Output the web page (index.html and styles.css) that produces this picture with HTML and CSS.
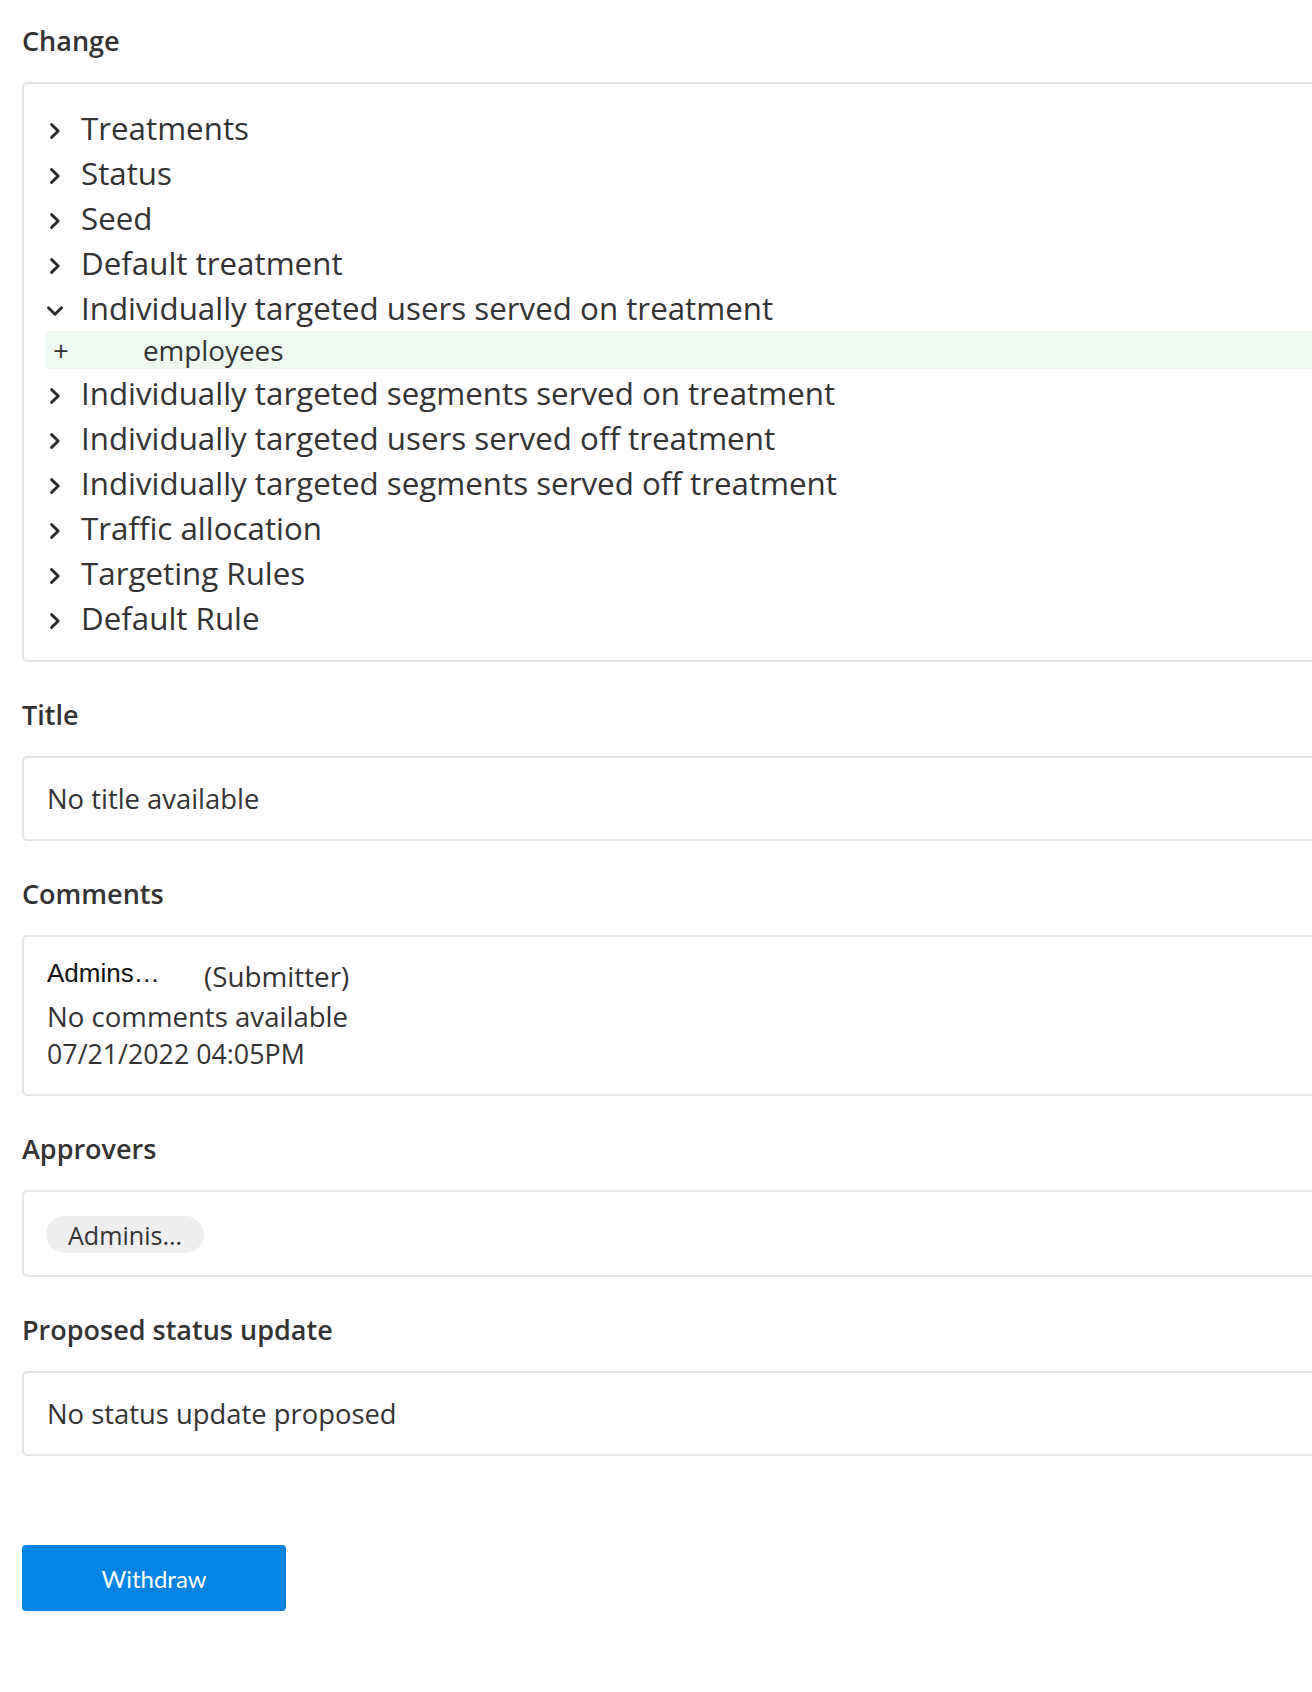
FILE: index.html
```html
<!DOCTYPE html>
<html lang="en">
<head>
<meta charset="utf-8">
<title>Change request</title>
<link rel="stylesheet" href="styles.css">
</head>
<body>
<div class="page">
  <section class="field">
    <h3 class="field-label">Change</h3>
    <div class="field-box tree">
      <div class="tree-item"><svg class="chev" viewBox="0 0 18 18"><path d="M5.6 2.6 L12.2 9 L5.6 15.4"/></svg><span>Treatments</span></div>
      <div class="tree-item"><svg class="chev" viewBox="0 0 18 18"><path d="M5.6 2.6 L12.2 9 L5.6 15.4"/></svg><span>Status</span></div>
      <div class="tree-item"><svg class="chev" viewBox="0 0 18 18"><path d="M5.6 2.6 L12.2 9 L5.6 15.4"/></svg><span>Seed</span></div>
      <div class="tree-item"><svg class="chev" viewBox="0 0 18 18"><path d="M5.6 2.6 L12.2 9 L5.6 15.4"/></svg><span>Default treatment</span></div>
      <div class="tree-item"><svg class="chev" viewBox="0 0 18 18"><path d="M2.4 5.8 L9 12.3 L15.6 5.8"/></svg><span>Individually targeted users served on treatment</span></div>
      <div class="diff-row added"><span class="diff-sign">+</span><span class="diff-text">employees</span></div>
      <div class="tree-item"><svg class="chev" viewBox="0 0 18 18"><path d="M5.6 2.6 L12.2 9 L5.6 15.4"/></svg><span>Individually targeted segments served on treatment</span></div>
      <div class="tree-item"><svg class="chev" viewBox="0 0 18 18"><path d="M5.6 2.6 L12.2 9 L5.6 15.4"/></svg><span>Individually targeted users served off treatment</span></div>
      <div class="tree-item"><svg class="chev" viewBox="0 0 18 18"><path d="M5.6 2.6 L12.2 9 L5.6 15.4"/></svg><span>Individually targeted segments served off treatment</span></div>
      <div class="tree-item"><svg class="chev" viewBox="0 0 18 18"><path d="M5.6 2.6 L12.2 9 L5.6 15.4"/></svg><span>Traffic allocation</span></div>
      <div class="tree-item"><svg class="chev" viewBox="0 0 18 18"><path d="M5.6 2.6 L12.2 9 L5.6 15.4"/></svg><span>Targeting Rules</span></div>
      <div class="tree-item"><svg class="chev" viewBox="0 0 18 18"><path d="M5.6 2.6 L12.2 9 L5.6 15.4"/></svg><span>Default Rule</span></div>
    </div>
  </section>

  <section class="field">
    <h3 class="field-label">Title</h3>
    <div class="field-box text-box">No title available</div>
  </section>

  <section class="field">
    <h3 class="field-label">Comments</h3>
    <div class="field-box comment">
      <div class="comment-head"><span class="comment-author">Admins…</span><span class="comment-role">(Submitter)</span></div>
      <div class="comment-body">No comments available</div>
      <div class="comment-date">07/21/2022 04:05PM</div>
    </div>
  </section>

  <section class="field">
    <h3 class="field-label">Approvers</h3>
    <div class="field-box chips">
      <span class="chip">Adminis…</span>
    </div>
  </section>

  <section class="field">
    <h3 class="field-label">Proposed status update</h3>
    <div class="field-box text-box">No status update proposed</div>
  </section>

  <div class="actions">
    <button class="btn-primary" type="button">Withdraw</button>
  </div>
</div>
</body>
</html>
```

FILE: styles.css
```css
* { box-sizing: border-box; }

html, body {
  margin: 0;
  padding: 0;
  background: #ffffff;
  overflow: hidden;
}

body {
  font-family: "Open Sans", "Noto Sans", sans-serif;
  color: #333333;
}

.page {
  width: 1340px;
  padding: 23px 0 40px 22px;
}

.field + .field {
  margin-top: 35px;
}

.field-label {
  margin: 0 0 23px 0;
  font-size: 27px;
  line-height: 36px;
  font-weight: 600;
  color: #333333;
}

.field-box {
  border: 2px solid #e4e4e4;
  border-right: none;
  border-radius: 5px 0 0 5px;
  background: #ffffff;
}

/* Change tree */
.tree {
  padding: 22px 0 19px 21px;
}

.tree-item {
  display: flex;
  align-items: center;
  height: 45px;
  font-size: 31.3px;
  line-height: 45px;
  color: #333333;
}

.chev {
  width: 18px;
  height: 18px;
  margin: 4px 17px 0 1px;
  flex: none;
  fill: none;
  stroke: #2b2b2b;
  stroke-width: 2.9;
  stroke-linecap: round;
  stroke-linejoin: round;
}

.diff-row {
  display: flex;
  align-items: center;
  height: 38px;
  margin-bottom: 2px;
  font-size: 27.8px;
  line-height: 38px;
  color: #333333;
}

.diff-row.added {
  background: #eff8f0;
}

.diff-sign {
  width: 98px;
  padding-left: 8px;
  flex: none;
}

/* Plain text boxes */
.text-box {
  padding: 20px 22px 20px 23px;
  font-size: 27.4px;
  line-height: 41px;
}

/* Comments */
.comment {
  padding: 20px 22px 21px 23px;
}

.comment-head {
  display: flex;
  align-items: flex-start;
  height: 40px;
}

.comment-author {
  width: 157px;
  flex: none;
  font-family: "Liberation Sans", Arial, sans-serif;
  font-size: 26px;
  line-height: 32px;
  color: #111111;
}

.comment-role {
  font-size: 27.8px;
  line-height: 38px;
}

.comment-body {
  font-size: 27.6px;
  line-height: 38px;
}

.comment-date {
  font-size: 26.8px;
  line-height: 38px;
}

/* Approvers */
.chips {
  padding: 24px 22px 22px 22px;
}

.chip {
  display: inline-flex;
  align-items: center;
  height: 37px;
  padding: 0 22px;
  border-radius: 19px;
  background: #efefef;
  font-size: 25.1px;
  color: #333333;
}

/* Actions */
.actions {
  margin-top: 89px;
}

.btn-primary {
  width: 264px;
  height: 66px;
  border: none;
  border-radius: 4px;
  background: #0284e3;
  color: #ffffff;
  font-family: "Lato", "Open Sans", sans-serif;
  font-size: 24px;
  padding: 0;
}
```
